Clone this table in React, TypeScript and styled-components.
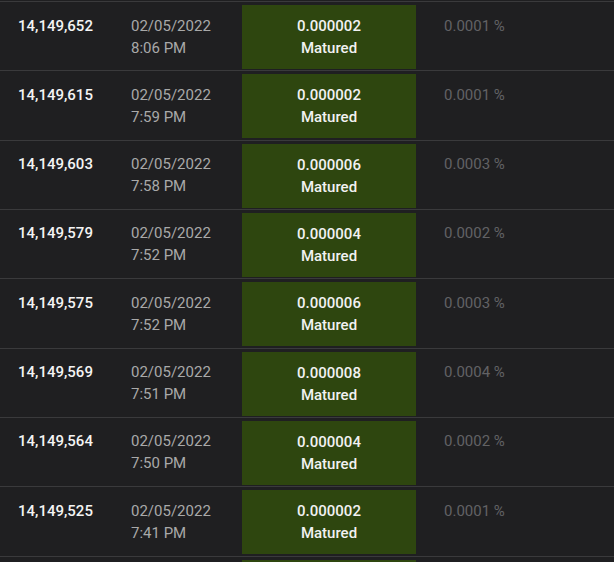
import React from 'react'
import styled, { createGlobalStyle } from 'styled-components'

//// global
const GlobalStyle = createGlobalStyle`
  html, body {
    margin: 0;
    padding: 0;
    background: #1f1f21;
    font-family: Roboto, "Liberation Sans", Arial, sans-serif;
    overflow: hidden;
  }
`

//// styles
const Table = styled.div`
  width: 614px;
  height: 562px;
  padding-top: 1px;
  box-sizing: border-box;
  background: #1f1f21;
  overflow: hidden;
`

const Row = styled.div`
  display: grid;
  grid-template-columns: 131px 111px 174px 1fr;
  align-items: start;
  height: 69.33px;
  box-sizing: border-box;
  border-top: 1px solid #3a3a3c;
  padding-top: 3px;
`

const Cell = styled.div`
  padding-top: 9.5px;
  font-size: 15px;
  line-height: 22px;
`

const BlockCell = styled(Cell)`
  padding-left: 18px;
  color: #f4f4f4;
  font-weight: 500;
`

const DateCell = styled(Cell)`
  color: #a9a9a9;
`

const StatusCell = styled.div<{ $tone: string }>`
  height: 64px;
  background: ${p => p.$tone};
  display: flex;
  flex-direction: column;
  align-items: center;
  justify-content: center;
  color: #f2f2f2;
  font-weight: 500;
  font-size: 15px;
  line-height: 22px;
`

const PercentCell = styled(Cell)`
  padding-left: 28px;
  color: #626265;
`

//// data
interface Reward {
  block: string
  date: string
  time: string
  amount: string
  percent: string
}

const rewards: Reward[] = [
  { block: '14,149,652', date: '02/05/2022', time: '8:06 PM', amount: '0.000002', percent: '0.0001 %' },
  { block: '14,149,615', date: '02/05/2022', time: '7:59 PM', amount: '0.000002', percent: '0.0001 %' },
  { block: '14,149,603', date: '02/05/2022', time: '7:58 PM', amount: '0.000006', percent: '0.0003 %' },
  { block: '14,149,579', date: '02/05/2022', time: '7:52 PM', amount: '0.000004', percent: '0.0002 %' },
  { block: '14,149,575', date: '02/05/2022', time: '7:52 PM', amount: '0.000006', percent: '0.0003 %' },
  { block: '14,149,569', date: '02/05/2022', time: '7:51 PM', amount: '0.000008', percent: '0.0004 %' },
  { block: '14,149,564', date: '02/05/2022', time: '7:50 PM', amount: '0.000004', percent: '0.0002 %' },
  { block: '14,149,525', date: '02/05/2022', time: '7:41 PM', amount: '0.000002', percent: '0.0001 %' },
]

const GREEN = '#2e460f'

const App: React.FC = () => {
  return (
    <>
      <GlobalStyle />
      <Table>
        {rewards.map(r => (
          <Row key={r.block}>
            <BlockCell>{r.block}</BlockCell>
            <DateCell>
              <div>{r.date}</div>
              <div>{r.time}</div>
            </DateCell>
            <StatusCell $tone={GREEN}>
              <div>{r.amount}</div>
              <div>Matured</div>
            </StatusCell>
            <PercentCell>{r.percent}</PercentCell>
          </Row>
        ))}
        {/* next row, only its top edge is in view */}
        <Row>
          <span />
          <span />
          <StatusCell $tone={GREEN} />
        </Row>
      </Table>
    </>
  )
}

export default App
